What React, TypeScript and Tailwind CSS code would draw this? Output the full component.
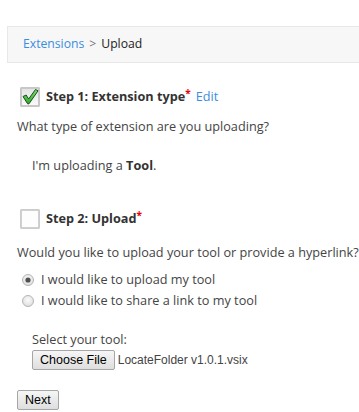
import React from "react";

const CheckedBox: React.FC = () => (
  <svg width="20" height="20" viewBox="0 0 20 20" className="overflow-visible">
    <defs>
      <linearGradient id="cbg" x1="0" y1="0" x2="0" y2="1">
        <stop offset="0" stopColor="#e4e4e4" />
        <stop offset="1" stopColor="#fafafa" />
      </linearGradient>
      <linearGradient id="chk" x1="0" y1="0" x2="0" y2="1">
        <stop offset="0" stopColor="#7be06f" />
        <stop offset="1" stopColor="#2ea82a" />
      </linearGradient>
    </defs>
    <rect x="0.5" y="0.5" width="19" height="19" fill="#8f8f8f" />
    <rect x="1.5" y="1.5" width="17" height="17" fill="url(#cbg)" stroke="#c8c8c8" />
    <path
      d="M3 9.5 L6.2 8 L8.6 12 L15.5 2.5 L18 3.8 L9 16.8 L7.6 16.8 Z"
      fill="url(#chk)"
      stroke="#1d4d1a"
      strokeWidth="1"
      strokeLinejoin="round"
    />
  </svg>
);

const EmptyBox: React.FC = () => (
  <svg width="20" height="20" viewBox="0 0 20 20">
    <rect x="0.5" y="0.5" width="19" height="19" fill="#9a9a9a" />
    <rect x="1.5" y="1.5" width="17" height="17" fill="#fdfdfd" stroke="#d0d0d0" />
  </svg>
);

const Radio: React.FC<{ checked?: boolean }> = ({ checked }) => (
  <svg width="12" height="12" viewBox="0 0 12 12">
    <defs>
      <radialGradient id="rg" cx="0.5" cy="0.4" r="0.6">
        <stop offset="0" stopColor="#fbfbfb" />
        <stop offset="1" stopColor="#dedede" />
      </radialGradient>
    </defs>
    <circle cx="6" cy="6" r="5.5" fill="url(#rg)" stroke="#b5b5b5" />
    {checked && <circle cx="6" cy="6" r="2.6" fill="#505050" />}
  </svg>
);

const App: React.FC = () => {
  const font = { fontFamily: '"Open Sans", "Noto Sans", sans-serif' };
  const arial = { fontFamily: '"Liberation Sans", Arial, sans-serif' };
  return (
    <div className="w-[359px] h-[412px] bg-white overflow-hidden text-[#444] text-[12.7px]" style={font}>
      <div className="h-[26px]" />
      <div className="ml-[7px] h-[37px] bg-[#f7f7f7] border border-[#e8e8e8] border-r-0 flex items-center pl-[15px] text-[12.2px]">
        <span className="text-[#3b8ede]">Extensions</span>
        <span className="text-[#777] mx-[5px]">&gt;</span>
        <span className="text-[#222]">Upload</span>
      </div>

      <div className="pl-[17px]">
        <div className="h-[24px]" />
        <div className="flex items-center h-[20px] pl-[3px] gap-[6px] text-[12.7px]">
          <CheckedBox />
          <span className="font-bold text-[#333]">
            Step 1: Extension type
            <span className="text-red-600 text-[10px] relative -top-[4px]">*</span>
          </span>
          <span className="text-[#3b8ede] font-normal -ml-[1px]">Edit</span>
        </div>
        <div className="h-[20px] mt-[10px] flex items-center">
          What type of extension are you uploading?
        </div>
        <div className="h-[20px] mt-[19px] flex items-center pl-[15px]">
          <span>
            I'm uploading a <span className="font-bold text-[#333]">Tool</span>.
          </span>
        </div>

        <div className="flex items-center h-[20px] pl-[3px] gap-[6px] mt-[33px] text-[12.7px]">
          <EmptyBox />
          <span className="font-bold text-[#333]">
            Step 2: Upload
            <span className="text-red-600 text-[10px] relative -top-[4px]">*</span>
          </span>
        </div>
        <div className="h-[20px] mt-[14px] flex items-center whitespace-nowrap">
          Would you like to upload your tool or provide a hyperlink?
        </div>
        <div className="h-[21px] mt-[6px] flex items-center pl-[5px] gap-[7px]">
          <Radio checked />
          <span>I would like to upload my tool</span>
        </div>
        <div className="h-[21px] flex items-center pl-[5px] gap-[7px]">
          <Radio />
          <span>I would like to share a link to my tool</span>
        </div>

        <div className="pl-[15px]">
          <div className="h-[20px] mt-[19px] flex items-center">Select your tool:</div>
          <div className="flex items-center gap-[3px]" style={arial}>
            <button className="h-[20px] px-[7px] text-[12.5px] text-black bg-gradient-to-b from-[#f6f6f6] to-[#dedede] border border-[#a6a6a6] rounded-[2px]">
              Choose File
            </button>
            <span className="text-[12px] text-[#444]">LocateFolder v1.0.1.vsix</span>
          </div>
        </div>

        <button
          className="mt-[20px] h-[20px] px-[7px] text-[12.5px] text-black bg-gradient-to-b from-[#f6f6f6] to-[#dedede] border border-[#a6a6a6] rounded-[2px]"
          style={arial}
        >
          Next
        </button>
      </div>
    </div>
  );
};

export default App;
